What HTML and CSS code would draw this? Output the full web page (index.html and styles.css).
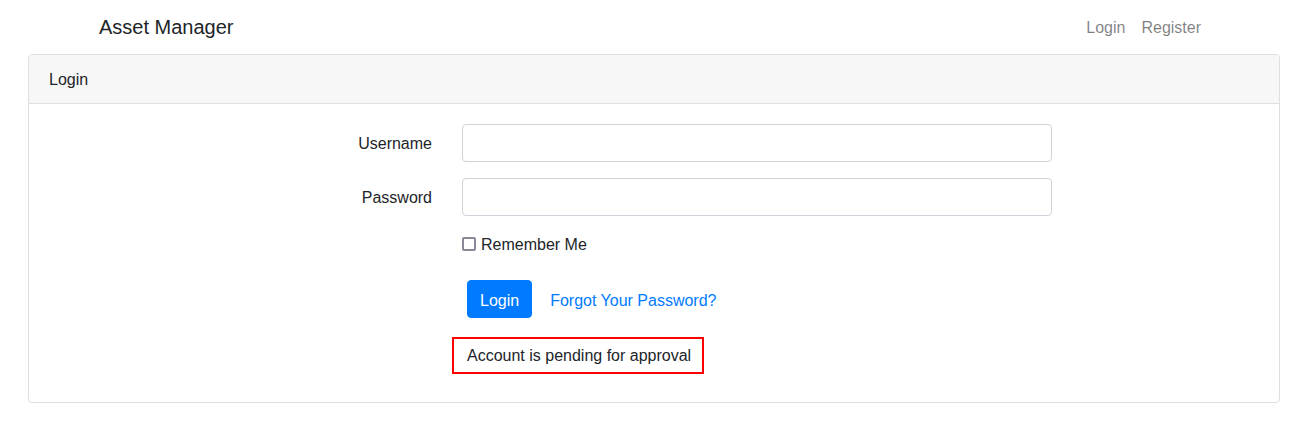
FILE: index.html
```html
<!DOCTYPE html>
<html lang="en">

<head>
	<meta charset="UTF-8">
	<meta name="viewport" content="width=device-width, initial-scale=1.0">
	<title>Asset Manager</title>
	<link rel="stylesheet" href="styles.css">
</head>

<body>
	<nav class="navbar">
		<a class="brand" href="#">Asset Manager</a>
		<ul class="nav">
			<li><a href="#">Login</a></li>
			<li><a href="#">Register</a></li>
		</ul>
	</nav>
	<div class="card">
		<div class="card-header">Login</div>
		<div class="card-body">
			<form>
				<div class="form-row">
					<label for="username">Username</label>
					<input id="username" type="text" class="form-control">
				</div>
				<div class="form-row">
					<label for="password">Password</label>
					<input id="password" type="password" class="form-control">
				</div>
				<div class="form-row">
					<div class="check">
						<input id="remember" type="checkbox">
						<label for="remember">Remember Me</label>
					</div>
				</div>
				<div class="form-row actions">
					<div class="buttons">
						<button type="button" class="btn">Login</button>
						<a class="link" href="#">Forgot Your Password?</a>
					</div>
				</div>
				<div class="form-row last">
					<div class="alert">Account is pending for approval</div>
				</div>
			</form>
		</div>
	</div>
</body>

</html>
```

FILE: styles.css
```css
* {
	box-sizing: border-box;
	padding: 0;
	margin: 0;
	list-style: none;
}

body {
	font-family: "Liberation Sans", Arial, sans-serif;
	font-size: 16px;
	line-height: 1.5;
	color: #212529;
	background: #fff;
}

a {
	text-decoration: none;
}

.navbar {
	height: 54px;
	display: flex;
	align-items: center;
	justify-content: space-between;
	padding: 0 105px 0 99px;
}

.brand {
	font-size: 20px;
	line-height: 30px;
	color: #212529;
}

.nav {
	display: flex;
	padding-top: 2px;
}

.nav a {
	display: block;
	padding: 0 8px;
	color: rgba(0, 0, 0, 0.5);
}

.card {
	margin: 0 34px 0 28px;
	border: 1px solid #dfdfdf;
	border-radius: 4px;
}

.card-header {
	padding: 13px 20px 11px;
	background: #f7f7f7;
	border-bottom: 1px solid #dfdfdf;
	border-radius: 3px 3px 0 0;
}

.card-body {
	padding: 20px;
}

.form-row {
	display: grid;
	grid-template-columns: 383px 590px;
	column-gap: 30px;
	margin-bottom: 16px;
}

.form-row > label {
	padding: 8px 0 6px;
	text-align: right;
}

.form-control {
	display: block;
	width: 100%;
	height: 38px;
	padding: 6px 12px;
	font: inherit;
	color: #495057;
	border: 1px solid #ced4da;
	border-radius: 4px;
}

.check,
.buttons,
.alert {
	grid-column: 2;
}

.check {
	display: flex;
	align-items: center;
	height: 24px;
}

.check input {
	appearance: none;
	width: 14px;
	height: 14px;
	margin: 0 5px 0 0;
	border: 2px solid #8b8898;
	border-radius: 2px;
	background: #fff;
}

.check label {
	padding-top: 2px;
}

.actions {
	margin-top: 24px;
	margin-bottom: 19px;
}

.buttons {
	display: flex;
	align-items: center;
	gap: 18px;
	padding-left: 5px;
}

.btn {
	height: 38px;
	padding: 8px 12px 4px;
	font: inherit;
	line-height: 24px;
	color: #fff;
	background: #007bff;
	border: 1px solid #007bff;
	border-radius: 4px;
	cursor: pointer;
}

.link {
	padding-top: 4px;
	color: #007bff;
}

.last {
	margin-bottom: 8px;
}

.alert {
	justify-self: start;
	margin-left: -10px;
	padding: 5px 11px 4px 13px;
	border: 2px solid #f00;
}
```
